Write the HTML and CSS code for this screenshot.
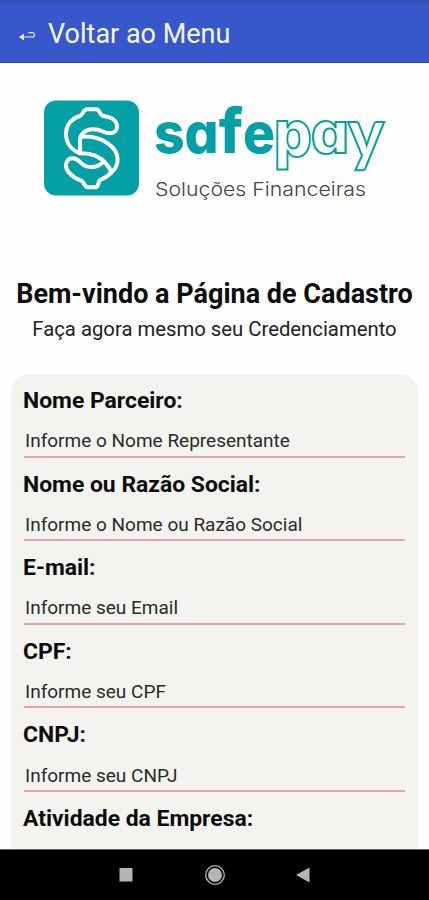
FILE: index.html
```html
<!DOCTYPE html>
<html lang="pt-BR">
<head>
    <meta charset="UTF-8">
    <meta name="viewport" content="width=device-width, initial-scale=1.0">
    <title>Safepay - Cadastro</title>
    <link rel="stylesheet" href="styles.css">
</head>
<body>
    <header class="top-bar">
        <svg class="back-icon" width="18" height="12" viewBox="0 0 18 12">
            <path d="M4 7H14.5Q16.500 7 16.500 5T14.500 2.700H10.500" />
            <path class="arrow" d="M1 7L6 3.500V10.500Z" />
        </svg>
        <a class="back-link">Voltar ao Menu</a>
    </header>

    <main class="content">
        <svg class="logo" width="350" height="115" viewBox="40 95 350 115">
            <rect class="logo-box" x="44" y="100.500" width="95" height="95" rx="12" />
            <g class="logo-mark" transform="translate(30 90) scale(.3333)">
                <path d="M150 190C124 180 108 158 108 132C108 102 128 84 150 78C160 75 158 58 172 58H198C211 58 207 74 219 78Q228 79 238 82C270 92 267 130 240 130C220 130 216 118 190 118C160 118 147 138 150 160Q151 177 150 190Z" />
                <path d="M155 140C180 138 208 143 230 158C270 184 272 222 244 248" />
                <path d="M150 190C184 189 213 202 229 222Q240 233 244 248C233 260 220 266 211 270C202 275 208 292 196 292H174C161 292 165 276 153 272C139 267 128 260 117 248C98 225 112 204 130 205C148 206 151 224 169 229C190 234 208 229 222 214" />
            </g>
            <text class="logo-safe" x="154" y="152.500" textLength="121" lengthAdjust="spacingAndGlyphs">sa<tspan class="logo-f">f</tspan>e</text>
            <text class="logo-pay logo-p" x="274" y="156" textLength="38" lengthAdjust="spacingAndGlyphs">p</text>
            <text class="logo-pay" x="311" y="152.500" textLength="38" lengthAdjust="spacingAndGlyphs">a</text>
            <text class="logo-pay logo-y" x="348" y="157.500" textLength="36" lengthAdjust="spacingAndGlyphs">y</text>
            <text class="logo-sub" x="155" y="195.500" textLength="211" lengthAdjust="spacingAndGlyphs">Soluções Financeiras</text>
        </svg>

        <h1 class="title">Bem-vindo a Página de Cadastro</h1>
        <p class="subtitle">Faça agora mesmo seu Credenciamento</p>

        <form class="form-card">
            <label for="parceiro">Nome Parceiro:</label>
            <input type="text" id="parceiro" placeholder="Informe o Nome Representante">
            <label for="razao">Nome ou Razão Social:</label>
            <input type="text" id="razao" placeholder="Informe o Nome ou Razão Social">
            <label for="email">E-mail:</label>
            <input type="text" id="email" placeholder="Informe seu Email">
            <label for="cpf">CPF:</label>
            <input type="text" id="cpf" placeholder="Informe seu CPF">
            <label for="cnpj">CNPJ:</label>
            <input type="text" id="cnpj" placeholder="Informe seu CNPJ">
            <label>Atividade da Empresa:</label>
        </form>
    </main>

    <nav class="nav-bar">
        <svg width="429" height="51" viewBox="0 0 429 51">
            <rect x="119.500" y="19" width="13" height="13.500" />
            <circle cx="215" cy="26" r="7" />
            <circle class="ring" cx="215" cy="26" r="9.300" />
            <path d="M296 26L309.500 18.500V33.500Z" />
        </svg>
    </nav>
</body>
</html>
```

FILE: styles.css
```css
* {
    box-sizing: border-box;
}
body {
    margin: 0;
    height: 900px;
    display: flex;
    flex-direction: column;
    overflow: hidden;
    font-family: Roboto, sans-serif;
    background: #fefefe;
    color: #0c0c0c;
}
.top-bar {
    flex: none;
    height: 63px;
    display: flex;
    align-items: center;
    padding: 5px 18px 0;
    background: linear-gradient(#3150b5, #3857cb 6px);
    border-bottom: 1px solid #2848b5;
}
.back-icon {
    margin: 5px 12px 0 0;
    fill: none;
    stroke: #e8edff;
    stroke-width: 1.2;
}
.back-icon .arrow {
    fill: #e8edff;
    stroke: none;
}
.back-link {
    font-size: 27px;
    color: #f4f7ff;
}
.content {
    flex: 1;
    min-height: 0;
    overflow: hidden;
}
.logo {
    display: block;
    margin: 32px 0 0 40px;
    overflow: visible;
}
.logo-box {
    fill: #04a0a5;
}
.logo-mark {
    fill: none;
    stroke: #fff;
    stroke-width: 12;
    stroke-linejoin: round;
    stroke-linecap: round;
}
.logo-safe, .logo-pay {
    font-family: Inter, sans-serif;
    font-weight: 800;
    font-size: 56px;
    font-feature-settings: "cv11";
    fill: #04a0a5;
}
.logo-f {
    font-size: 62px;
}
.logo-pay {
    font-size: 57px;
    fill: #fff;
    stroke: #04a0a5;
    stroke-width: 2;
}
.logo-p {
    font-size: 64px;
}
.logo-y {
    font-family: Lato, sans-serif;
    font-weight: 900;
    font-size: 70px;
}
.logo-sub {
    font-family: Inter, sans-serif;
    font-weight: 300;
    font-size: 19px;
    fill: #444;
}
.title {
    margin: 67px 0 0;
    font-size: 27px;
    line-height: 34px;
    text-align: center;
    white-space: nowrap;
}
.subtitle {
    margin: 4px 0 0;
    font-size: 20.3px;
    line-height: 28px;
    text-align: center;
    color: #222;
}
.form-card {
    display: flex;
    flex-direction: column;
    margin: 31px 11px 0;
    padding: 12px 13px 0 11px;
    height: 600px;
    border-radius: 18px;
    background: #f3f4ef;
}
label {
    height: 30px;
    font-size: 22.9px;
    line-height: 30px;
    font-weight: bold;
    margin-left: 1px;
}
input {
    height: 41.6px;
    margin: 0 0 12px 2px;
    padding: 10px 1px 0;
    border: none;
    border-bottom: 2px solid #e6a0b2;
    background: none;
    font-family: Roboto, sans-serif;
    font-size: 19px;
}
input::placeholder {
    color: #2a2a2a;
}
.nav-bar {
    flex: none;
    height: 51px;
    background: #000;
    border-top: 1px solid #666;
}
.nav-bar svg {
    display: block;
    margin-top: -1px;
    fill: #b5b5b5;
}
.nav-bar .ring {
    fill: none;
    stroke: #b5b5b5;
    stroke-width: 1.3;
}
```
